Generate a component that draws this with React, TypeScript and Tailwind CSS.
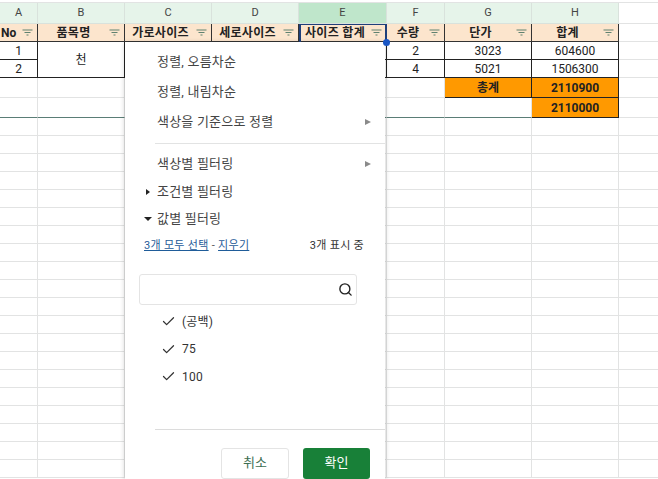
import React from "react";
import { Search, Check } from "lucide-react";

const colWidths = ["w-[38px]", "w-[87px]", "w-[87px]", "w-[87px]", "w-[88px]", "w-[58px]", "w-[87px]", "w-[87px]", "w-[39px]"];
const letters = ["A", "B", "C", "D", "E", "F", "G", "H", ""];
const headers = ["No", "품목명", "가로사이즈", "세로사이즈", "사이즈 합계", "수량", "단가", "합계"];
const font = "font-['Roboto','Noto_Sans_CJK_KR',sans-serif]";

const FilterIcon = () => (
  <svg width="11" height="7" viewBox="0 0 11 7" className="shrink-0">
    <path d="M0.5 1h10M2.5 3.5h6M4.5 6h2" stroke="#5f8270" strokeWidth="1" fill="none" />
  </svg>
);

function Cell({ col, children, className = "" }: { col: number; children?: React.ReactNode; className?: string }) {
  return (
    <div className={`${colWidths[col]} shrink-0 h-full flex items-center justify-center border-r border-b text-[12px] text-[#222] ${className}`}>
      {children}
    </div>
  );
}

const grey = "border-[#e2e3e3]";
const dark = "border-[#222]";

function EmptyRow({ h = "h-[18px]" }: { h?: string }) {
  return (
    <div className={`flex ${h}`}>
      {colWidths.map((_, i) => (
        <Cell key={i} col={i} className={i === 8 ? "border-r-0 " + grey : grey} />
      ))}
    </div>
  );
}

function MenuRow({ children, arrow, top }: { children: React.ReactNode; arrow?: boolean; top: string }) {
  return (
    <div className={`flex items-center justify-between pl-8 pr-[14px] text-[13px] tracking-[0.2px] text-[#444] ${top}`}>
      <span>{children}</span>
      {arrow && <span className="w-0 h-0 border-y-[3px] border-y-transparent border-l-[6px] border-l-[#8a8a8a]" />}
    </div>
  );
}

function ValueRow({ label }: { label: string }) {
  return (
    <div className="flex items-center h-[27.5px] pl-[36px] text-[12px] tracking-[0.2px] text-[#333]">
      <Check size={15} strokeWidth={2} className="text-[#333]" />
      <span className="ml-[6px]">{label}</span>
    </div>
  );
}

export default function App() {
  return (
    <div className={`relative w-[658px] h-[479px] overflow-hidden bg-white ${font}`}>
      <div className="h-[3px] bg-white border-b border-[#e2e3e3]" />

      {/* column letters */}
      <div className="flex h-[21px]">
        {letters.map((l, i) => (
          <div
            key={i}
            className={`${colWidths[i]} shrink-0 flex items-center justify-center border-r border-b border-[#d9e2dc] text-[11px] text-[#444] ${
              i === 8 ? "bg-white border-r-0 border-[#e2e3e3]" : i === 4 ? "bg-[#bfe6cb]" : "bg-[#e6f4ea]"
            }`}
          >
            {l}
          </div>
        ))}
      </div>

      {/* header row */}
      <div className="flex h-[18px]">
        {headers.map((h, i) => (
          <div
            key={h}
            className={`${colWidths[i]} shrink-0 flex items-center justify-between pr-[4px] border-r border-b border-[#333] bg-[#fce5cd] text-[12px] font-bold text-[#222]`}
          >
            <span className={i === 0 ? "pl-[1px]" : "flex-1 text-center tracking-[0.3px]"}>{h}</span>
            <FilterIcon />
          </div>
        ))}
        <Cell col={8} className={"border-r-0 " + grey} />
      </div>

      {/* data rows */}
      <div className="flex h-[18px]">
        <Cell col={0} className={dark}>1</Cell>
        <Cell col={1} className={"border-[#222] border-b-0"}>
          <span className="mt-[18px]">천</span>
        </Cell>
        <Cell col={2} className={dark} />
        <Cell col={3} className={dark} />
        <Cell col={4} className={dark} />
        <Cell col={5} className={dark}>2</Cell>
        <Cell col={6} className={dark}>3023</Cell>
        <Cell col={7} className={dark}>604600</Cell>
        <Cell col={8} className={"border-r-0 " + grey} />
      </div>
      <div className="flex h-[18px]">
        <Cell col={0} className={dark}>2</Cell>
        <Cell col={1} className={dark} />
        <Cell col={2} className={dark} />
        <Cell col={3} className={dark} />
        <Cell col={4} className={dark} />
        <Cell col={5} className={dark}>4</Cell>
        <Cell col={6} className={dark}>5021</Cell>
        <Cell col={7} className={dark}>1506300</Cell>
        <Cell col={8} className={"border-r-0 " + grey} />
      </div>

      {/* totals */}
      <div className="flex h-[20px]">
        {[0, 1, 2, 3, 4, 5].map((i) => (
          <Cell key={i} col={i} className={grey} />
        ))}
        <Cell col={6} className={`${dark} bg-[#ff9900] font-bold`}>총계</Cell>
        <Cell col={7} className={`${dark} bg-[#ff9900] font-bold`}>2110900</Cell>
        <Cell col={8} className={"border-r-0 " + grey} />
      </div>
      <div className="flex h-[20px]">
        {[0, 1, 2, 3, 4, 5, 6].map((i) => (
          <Cell key={i} col={i} className="border-[#e2e3e3] border-b-[#5a7d76]" />
        ))}
        <Cell col={7} className={`${dark} bg-[#ff9900] font-bold`}>2110000</Cell>
        <Cell col={8} className={"border-r-0 " + grey} />
      </div>

      {Array.from({ length: 20 }).map((_, i) => (
        <EmptyRow key={i} />
      ))}

      {/* selected header outline, open at the bottom where the menu starts */}
      <div className="absolute left-[299px] top-[24px] w-[88px] h-[18px] border-x-2 border-t border-[#1f3f7a] pointer-events-none" />
      <div className="absolute left-[386px] top-[42px] w-px h-[36px] bg-[#222]" />

      {/* filter dropdown */}
      <div className="absolute left-[125px] top-[42px] w-[260px] h-[437px] bg-white shadow-[0_1px_5px_rgba(0,0,0,0.22)]">
        <MenuRow top="mt-[10px] h-[19px]">정렬, 오름차순</MenuRow>
        <MenuRow top="mt-[11px] h-[19px]">정렬, 내림차순</MenuRow>
        <MenuRow top="mt-[11px] h-[19px]" arrow>색상을 기준으로 정렬</MenuRow>
        <div className="ml-[30px] mt-[12px] h-px bg-[#e2e3e3]" />
        <MenuRow top="mt-[10px] h-[19px]" arrow>색상별 필터링</MenuRow>

        <div className="flex items-center mt-[9px] h-[19px] pl-[21px] text-[13px] tracking-[0.2px] text-[#444]">
          <span className="w-0 h-0 border-y-[3px] border-y-transparent border-l-[4px] border-l-[#222]" />
          <span className="ml-[7px]">조건별 필터링</span>
        </div>
        <div className="flex items-center mt-[8px] h-[19px] pl-[19px] text-[13px] tracking-[0.2px] text-[#444]">
          <span className="w-0 h-0 border-x-[4px] border-x-transparent border-t-[4px] border-t-[#222]" />
          <span className="ml-[5px]">값별 필터링</span>
        </div>

        <div className="flex items-center justify-between mt-[9px] h-[18px] pl-[19px] pr-[21px] text-[11px] tracking-[0.3px] text-[#333]">
          <span>
            <span className="text-[#1f5c99] underline">3개 모두 선택</span>
            <span className="text-[#555]"> - </span>
            <span className="text-[#1f5c99] underline">지우기</span>
          </span>
          <span>3개 표시 중</span>
        </div>

        <div className="flex items-center justify-end ml-[14px] mt-[19px] w-[218px] h-[31px] pr-[3px] bg-white border border-[#e4e4e4] rounded-[3px]">
          <Search size={15} strokeWidth={2.2} className="text-[#222]" />
        </div>

        <div className="mt-[3px]">
          <ValueRow label="(공백)" />
          <ValueRow label="75" />
          <ValueRow label="100" />
        </div>

        <div className="ml-[30px] mt-[38px] h-px bg-[#dcdcdc]" />

        <div className="flex justify-end gap-[14px] mt-[18px] pr-[15px]">
          <button className="w-[68px] h-[31px] bg-white border border-[#e4e4e4] rounded-[3px] text-[13px] text-[#3c6e52]">
            취소
          </button>
          <button className="w-[67px] h-[31px] bg-[#188038] rounded-[3px] text-[13px] text-white">
            확인
          </button>
        </div>
      </div>

      {/* fill handle sits above the menu edge */}
      <div className="absolute left-[383px] top-[39px] w-[7px] h-[7px] rounded-full bg-[#1a56c4]" />
    </div>
  );
}
